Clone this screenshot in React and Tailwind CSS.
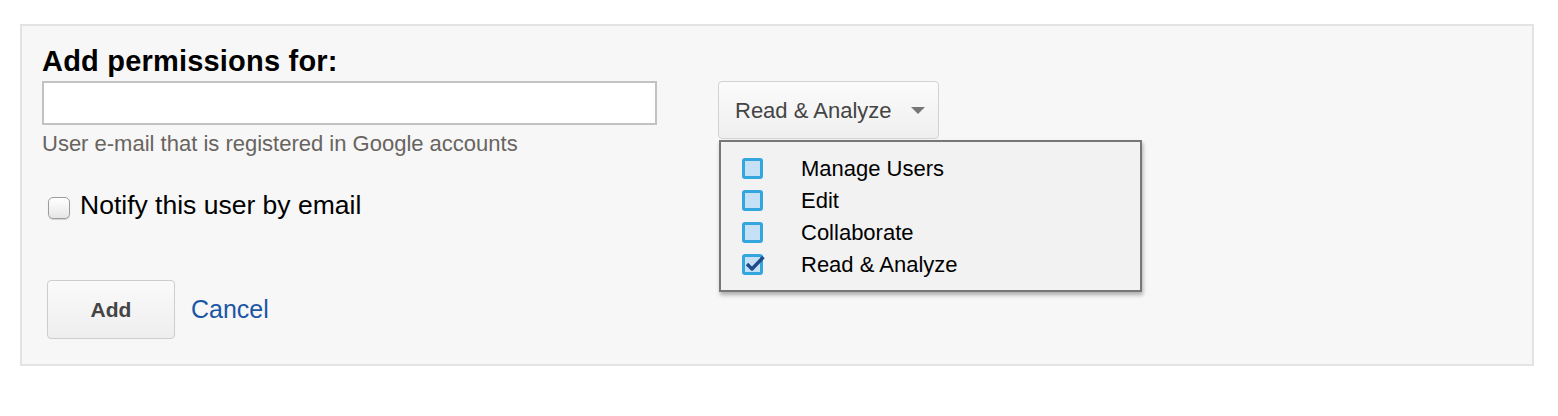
import { useState } from 'react'

const roles = ['Manage Users', 'Edit', 'Collaborate', 'Read & Analyze']

const RoleBox = ({ checked }) => (
  <div className="relative w-[21px] h-[21px] rounded-[3px] border-[3px] border-[#33a6de] bg-[#c6e0f6]">
    {checked && (
      <svg className="absolute -left-[1px] -top-[5px]" width="22" height="22" viewBox="0 0 22 22">
        <path d="M3 12 L8 17 L19.5 5" fill="none" stroke="#1e4d8c" strokeWidth="3.4" strokeLinejoin="round" />
      </svg>
    )}
  </div>
)

const App = () => {
  const [role] = useState('Read & Analyze')

  return (
    <div className="w-[1558px] h-[416px] bg-white pt-[24px] pl-[20px] font-['Liberation_Sans',Arial,sans-serif]">
      <div className="w-[1514px] h-[342px] border-2 border-[#e3e3e3] bg-[#f7f7f7] px-[20px] pt-[21px]">
        <h2 className="text-[29px] leading-[28px] font-bold tracking-[0.2px] text-black">Add permissions for:</h2>

        <div className="flex mt-[6px]">
          <div className="w-[676px] flex flex-col">
            <input type="text" className="w-[615px] h-[44px] border-2 border-[#c2c2c2] bg-white outline-none" />
            <p className="mt-[6px] text-[22px] leading-[26px] text-[#686460]">
              User e-mail that is registered in Google accounts
            </p>

            <label className="mt-[33px] flex items-start">
              <span className="ml-[6px] mt-[7px] w-[22px] h-[22px] rounded-[5px] border border-[#9c9c9c] bg-gradient-to-b from-white to-[#e6e6e6] shadow-[0_1px_1px_rgba(0,0,0,0.15)]" />
              <span className="ml-[10px] text-[26.5px] leading-[30px] text-black">Notify this user by email</span>
            </label>

            <div className="mt-[60px] ml-[5px] flex items-center">
              <button className="w-[128px] h-[59px] rounded-[4px] border border-[#cdcdcd] bg-gradient-to-b from-[#fafafa] to-[#eeeeee] text-[21px] font-bold text-[#444]">
                Add
              </button>
              <a className="ml-[16px] text-[25px] text-[#1c56a6]">Cancel</a>
            </div>
          </div>

          <div className="relative">
            <button className="w-[221px] h-[58px] rounded-[4px] border border-[#d2d2d2] bg-gradient-to-b from-[#fbfbfb] to-[#efefef] flex items-center pl-[16px]">
              <span className="text-[22px] text-[#444]">{role}</span>
              <svg className="ml-[19px]" width="14" height="7" viewBox="0 0 14 7">
                <path d="M0 0 H14 L7 7 Z" fill="#777" />
              </svg>
            </button>

            <div className="absolute left-[1px] top-[59px] w-[423px] h-[152px] border-2 border-[#777] bg-[#f2f2f2] shadow-[1px_3px_4px_rgba(0,0,0,0.3)] py-[10px] pl-[21px]">
              {roles.map((r) => (
                <div key={r} className="h-[32px] flex items-center">
                  <div className="w-[59px]">
                    <RoleBox checked={r === role} />
                  </div>
                  <span className="text-[22px] text-black">{r}</span>
                </div>
              ))}
            </div>
          </div>
        </div>
      </div>
    </div>
  )
}

export default App
